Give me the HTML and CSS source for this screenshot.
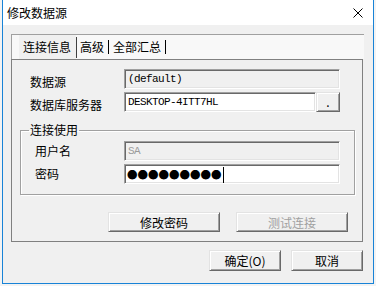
FILE: index.html
```html
<!DOCTYPE html>
<html lang="zh-CN">
<head>
  <meta charset="UTF-8" />
  <title>修改数据源</title>
  <link rel="stylesheet" href="styles.css">
</head>
<body>
  <div class="window">
    <div class="titlebar">
      <span class="title">修改数据源</span>
      <svg class="close" width="10" height="10" viewBox="0 0 10 10">
        <path d="M0.5 0.5 L9.5 9.5 M9.5 0.5 L0.5 9.5" stroke="#000" stroke-width="1" fill="none"/>
      </svg>
    </div>
    <div class="client">
      <div class="tabs">
        <span class="tab active">连接信息</span>
        <span class="sep tall"></span>
        <span class="tab">高级</span>
        <span class="sep"></span>
        <span class="tab">全部汇总</span>
        <span class="sep"></span>
      </div>
      <div class="panel">
        <div class="row first">
          <label class="label">数据源</label>
          <div class="field disabled mono">(default)</div>
        </div>
        <div class="row">
          <label class="label">数据库服务器</label>
          <div class="field mono short">DESKTOP-4ITT7HL</div>
          <button class="btn browse">.</button>
        </div>
        <fieldset class="group">
          <legend>连接使用</legend>
          <div class="row">
            <label class="label">用户名</label>
            <div class="field disabled mono gray">SA</div>
          </div>
          <div class="row">
            <label class="label">密码</label>
            <div class="field password"><span class="dots">●●●●●●●●●</span><span class="caret"></span></div>
          </div>
        </fieldset>
        <div class="panel-buttons">
          <button class="btn wide">修改密码</button>
          <button class="btn wide" disabled>测试连接</button>
        </div>
      </div>
      <div class="dialog-buttons">
        <button class="btn normal">确定(O)</button>
        <button class="btn normal">取消</button>
      </div>
    </div>
  </div>
</body>
</html>
```

FILE: styles.css
```css
body {
  margin: 0;
  background-color: #f3f3f3;
  font-family: "Noto Sans CJK SC", "Liberation Sans", sans-serif;
  font-size: 12px;
  color: #000;
}

.window {
  box-sizing: border-box;
  width: 372px;
  height: 284px;
  margin-left: 2px;
  border: 1px solid #1883d7;
  border-top: none;
  display: flex;
  flex-direction: column;
}

.titlebar {
  height: 25px;
  flex: none;
  background-color: #fff;
  display: flex;
  align-items: center;
  justify-content: space-between;
  padding: 0 10px 0 4px;
}

.title {
  font-size: 12px;
  line-height: 16px;
}

.client {
  flex: 1;
  background-color: #f0f0f0;
  padding: 9px 9px 0 8px;
}

/* tab strip */
.tabs {
  box-sizing: border-box;
  width: 353px;
  height: 25px;
  background-color: #f8f8f8;
  border-top: 1px solid #a0a0a0;
  border-left: 1px solid #a0a0a0;
  padding-left: 7px;
  display: flex;
  align-items: center;
}

.tab {
  line-height: 16px;
  margin-left: 4px;
}

.tab.active {
  align-self: stretch;
  display: flex;
  align-items: center;
  margin-left: 0;
  padding: 0 5px 0 4px;
  background-color: #f0f0f0;
}

.sep {
  width: 1px;
  height: 14px;
  background-color: #000;
  margin-left: 4px;
}

.sep.tall {
  height: 21px;
  margin-left: 0;
  margin-right: -1px;
  background-color: #404040;
}

/* main panel */
.panel {
  box-sizing: border-box;
  width: 352px;
  height: 183px;
  border: 1px solid #808080;
  padding-top: 9px;
}

.row {
  display: flex;
  align-items: center;
  height: 20px;
  margin-bottom: 3px;
}

.panel > .row {
  padding-left: 18px;
}

.panel > .row .label {
  width: 94px;
  padding-top: 6px;
}

.label {
  flex: none;
  line-height: 16px;
}

.field {
  box-sizing: border-box;
  width: 216px;
  height: 20px;
  background-color: #fff;
  border: 1px solid;
  border-color: #a0a0a0 #fff #fff #a0a0a0;
  box-shadow: inset 1px 1px #696969, inset -1px -1px #e3e3e3;
  padding: 1px 0 0 3px;
  line-height: 17px;
  display: flex;
  align-items: center;
}

.field.short {
  width: 192px;
}

.field.disabled {
  background-color: #f0f0f0;
}

.mono {
  font-family: "Liberation Mono", monospace;
  font-size: 11px;
  letter-spacing: -0.6px;
}

.gray {
  color: #9a9a9a;
}

.password {
  padding-left: 2px;
}

.dots {
  font-family: "Noto Sans CJK SC", sans-serif;
  font-size: 10.5px;
  line-height: 16px;
}

.caret {
  width: 1px;
  height: 16px;
  background-color: #000;
  margin-left: 1px;
}

/* group box */
.group {
  box-sizing: border-box;
  width: 335px;
  margin: 11px 0 0 8px;
  padding: 4px 0 10px 14px;
  border: 1px solid #a0a0a0;
  box-shadow: 1px 1px #fff, inset 1px 1px #fff;
  min-inline-size: 0;
}

.group legend {
  font-size: 12px;
  line-height: 14px;
  padding: 0 1px;
  margin-left: -6px;
}

.group .label {
  width: 89px;
}

.group .row:last-child {
  margin-bottom: 0;
}

/* buttons */
.btn {
  box-sizing: border-box;
  height: 20px;
  padding: 0;
  font-family: "Noto Sans CJK SC", "Liberation Sans", sans-serif;
  font-size: 12px;
  color: #000;
  background-color: #f0f0f0;
  border: 1px solid;
  border-color: #e3e3e3 #696969 #696969 #e3e3e3;
  box-shadow: inset 1px 1px #fff, inset -1px -1px #a0a0a0;
}

.btn:disabled {
  color: #a0a0a0;
}

.browse {
  width: 24px;
  line-height: 12px;
}

.panel-buttons {
  display: flex;
  justify-content: flex-end;
  gap: 16px;
  padding-right: 14px;
  margin-top: 17px;
}

.wide {
  width: 112px;
}

.dialog-buttons {
  display: flex;
  justify-content: flex-end;
  gap: 10px;
  margin-top: 8px;
  padding-right: 1px;
}

.normal {
  width: 72px;
  height: 21px;
}
```
